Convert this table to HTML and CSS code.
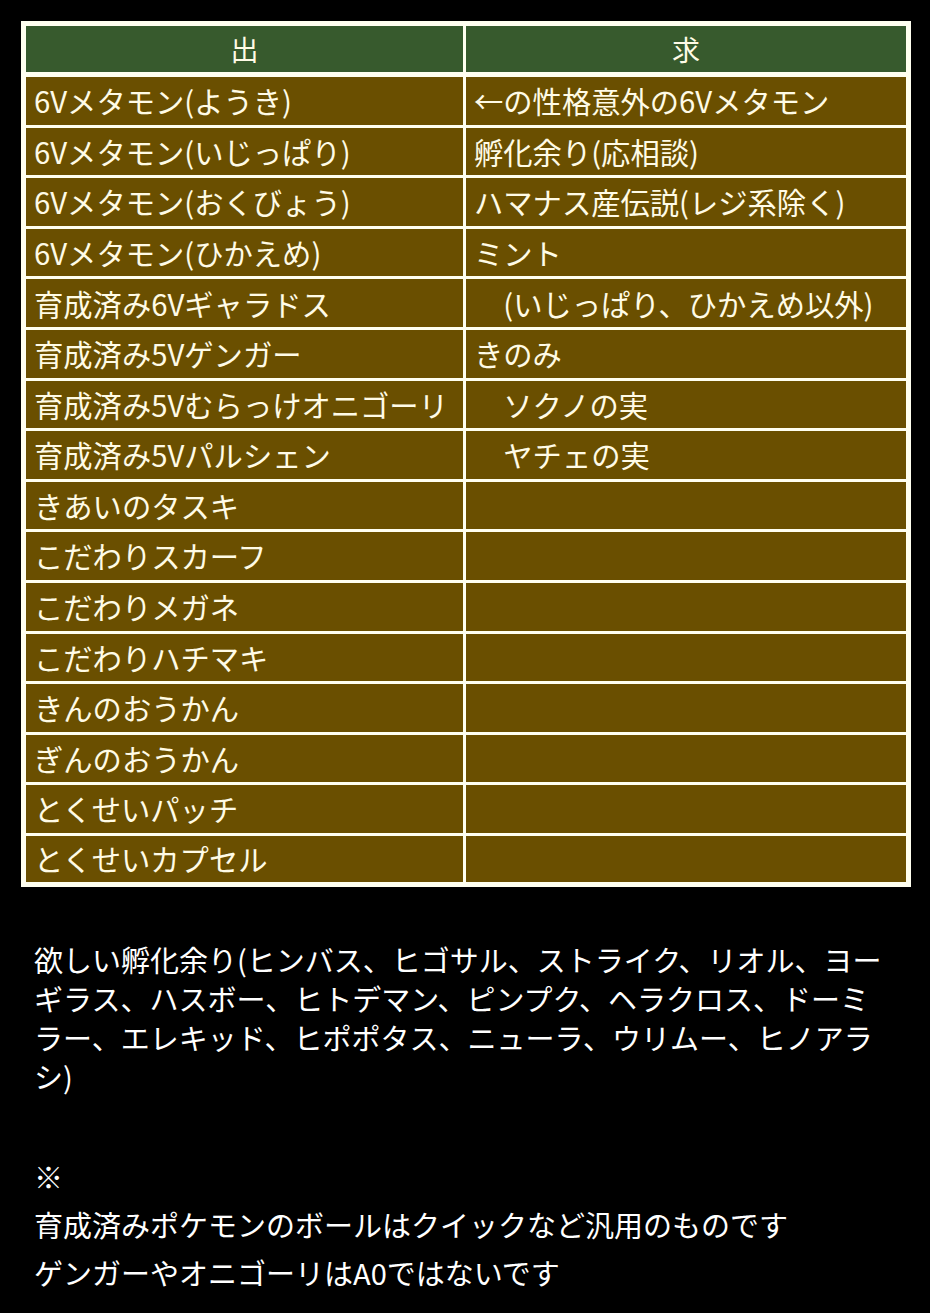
FILE: index.html
```html
<!DOCTYPE html>
<html lang="ja">
<head>
<meta charset="utf-8">
<title>出 / 求</title>
<link rel="stylesheet" href="styles.css">
</head>
<body>
<div class="page">
  <div class="trade">
    <div class="trade-head">
      <div class="cell head">出</div>
      <div class="cell head">求</div>
    </div>
    <div class="trade-body">
      <div class="cell">6Vメタモン(ようき)</div><div class="cell">←の性格意外の6Vメタモン</div>
      <div class="cell">6Vメタモン(いじっぱり)</div><div class="cell">孵化余り(応相談)</div>
      <div class="cell">6Vメタモン(おくびょう)</div><div class="cell">ハマナス産伝説(レジ系除く)</div>
      <div class="cell">6Vメタモン(ひかえめ)</div><div class="cell">ミント</div>
      <div class="cell">育成済み6Vギャラドス</div><div class="cell">　(いじっぱり、ひかえめ以外)</div>
      <div class="cell">育成済み5Vゲンガー</div><div class="cell">きのみ</div>
      <div class="cell">育成済み5Vむらっけオニゴーリ</div><div class="cell">　ソクノの実</div>
      <div class="cell">育成済み5Vパルシェン</div><div class="cell">　ヤチェの実</div>
      <div class="cell">きあいのタスキ</div><div class="cell"></div>
      <div class="cell">こだわりスカーフ</div><div class="cell"></div>
      <div class="cell">こだわりメガネ</div><div class="cell"></div>
      <div class="cell">こだわりハチマキ</div><div class="cell"></div>
      <div class="cell">きんのおうかん</div><div class="cell"></div>
      <div class="cell">ぎんのおうかん</div><div class="cell"></div>
      <div class="cell">とくせいパッチ</div><div class="cell"></div>
      <div class="cell">とくせいカプセル</div><div class="cell"></div>
    </div>
  </div>

  <div class="notes">
    <p class="wanted">欲しい孵化余り(ヒンバス、ヒゴサル、ストライク、リオル、ヨー<br>ギラス、ハスボー、ヒトデマン、ピンプク、ヘラクロス、ドーミ<br>ラー、エレキッド、ヒポポタス、ニューラ、ウリムー、ヒノアラ<br>シ)</p>
    <p class="remark">※</p>
    <p class="remark">育成済みポケモンのボールはクイックなど汎用のものです</p>
    <p class="remark">ゲンガーやオニゴーリはA0ではないです</p>
  </div>
</div>
</body>
</html>
```

FILE: styles.css
```css
* { box-sizing: border-box; }

html, body {
  margin: 0;
  padding: 0;
  background: #000;
}

body {
  font-family: "Noto Sans CJK JP", "Noto Sans", sans-serif;
  color: #fff;
}

.page {
  width: 930px;
  min-height: 1313px;
  padding: 21px 0 0 21px;
}

.trade {
  width: 890px;
  background: #fffff0;
  padding: 5px;
  display: flex;
  flex-direction: column;
  gap: 5px;
}

.trade-head,
.trade-body {
  display: grid;
  grid-template-columns: 437px 440px;
  column-gap: 3px;
}

.trade-head {
  grid-template-rows: 46px;
}

.trade-body {
  row-gap: 3px;
  grid-template-rows: repeat(15, 47.6px) 46px;
}

.cell {
  background: #6a4f00;
  color: #fffbe6;
  font-size: 29.3px;
  line-height: 1;
  padding: 0 0 0 8px;
  display: flex;
  align-items: center;
  white-space: nowrap;
  overflow: hidden;
}

.cell.head {
  background: #375a2d;
  justify-content: center;
  padding: 0;
  font-size: 28px;
}

.notes {
  padding: 53px 0 0 13px;
}

.notes p {
  margin: 0;
  font-size: 29px;
  color: #fff;
}

.wanted {
  line-height: 39px;
}

.wanted + .remark {
  margin-top: 56px;
}

.remark {
  line-height: 48px;
}
```
